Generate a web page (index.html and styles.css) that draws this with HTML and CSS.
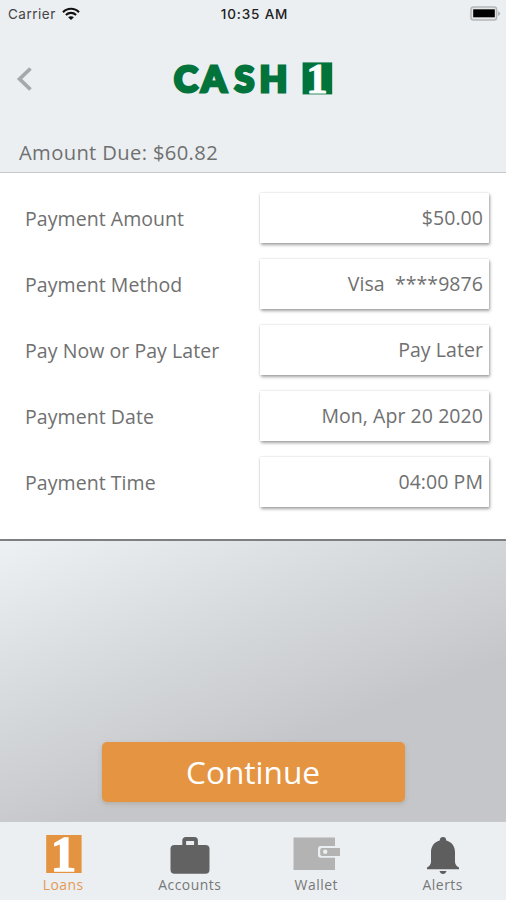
FILE: index.html
```html
<!DOCTYPE html>
<html lang="en">
<head>
<meta charset="utf-8">
<title>CASH 1</title>
<link rel="stylesheet" href="styles.css">
</head>
<body>
<div class="screen">
  <header class="header">
    <div class="status">
      <div class="carrier">
        <span>Carrier</span>
        <svg width="18" height="14" viewBox="0 0 18 14" fill="none" stroke="#111" stroke-width="2.1"><path d="M1 5.2C5.4.6 12.6.6 17 5.2M3.9 8C6.8 5.2 11.2 5.2 14.1 8"/><path d="M9 13 6.1 10.2C7.7 8.8 10.3 8.8 11.9 10.2Z" fill="#111" stroke="none"/></svg>
      </div>
      <span class="time">10:35 AM</span>
      <svg class="battery" width="31" height="16" viewBox="0 0 31 16"><rect x="1" y="1.1" width="25.6" height="13" rx="2.5" fill="#e4e6e8" stroke="#b4b6b8" stroke-width="1.5"/><rect x="3.2" y="3.3" width="21.6" height="8" fill="#000"/><path d="M28 5.2Q30.2 6 30.2 7.6T28 10Z" fill="#b4b6b8"/></svg>
    </div>
    <div class="brand">
      <svg class="back" width="16" height="26" viewBox="0 0 16 26" fill="none" stroke="#a7a8a9" stroke-width="3.8"><path d="M14.5 2.5 3.6 13 14.5 23.5"/></svg>
      <svg class="logo" width="170" height="60" viewBox="-4 -12 170 60" aria-label="CASH 1">
        <text class="logo-word" x="2 29.2 62.5 87.5" y="31.1">CASH</text>
        <rect x="130.6" y="1.4" width="29.6" height="32" fill="#03733c"/>
        <text class="logo-one" x="145" y="31.8" text-anchor="middle">1</text>
      </svg>
    </div>
    <div class="due">Amount Due: $60.82</div>
  </header>
  <main class="form">
    <div class="row"><span class="label">Payment Amount</span><div class="field">$50.00</div></div>
    <div class="row"><span class="label">Payment Method</span><div class="field">Visa&nbsp; ****9876</div></div>
    <div class="row"><span class="label">Pay Now or Pay Later</span><div class="field">Pay Later</div></div>
    <div class="row"><span class="label">Payment Date</span><div class="field">Mon, Apr 20 2020</div></div>
    <div class="row"><span class="label">Payment Time</span><div class="field">04:00 PM</div></div>
  </main>
  <section class="action"><button class="continue">Continue</button></section>
  <nav class="tabs">
    <a class="tab active">
      <svg width="48" height="42" viewBox="0 0 48 42"><rect x="7.2" y="2" width="35.4" height="38" fill="#e49340"/><text class="tab-one" x="24.7" y="37.6" text-anchor="middle">1</text></svg>
      <span>Loans</span>
    </a>
    <a class="tab">
      <svg width="48" height="42" viewBox="0 0 48 42"><rect x="4.5" y="12" width="39" height="28.8" rx="4" fill="#626262"/><path d="M18.2 13V7.6Q18.2 6 19.8 6H28.4Q30 6 30 7.6V13" fill="none" stroke="#626262" stroke-width="3.8"/></svg>
      <span>Accounts</span>
    </a>
    <a class="tab">
      <svg width="48" height="42" viewBox="0 0 48 42"><path d="M1.5 4.5H43V37H1.5Z" fill="#b3b3b3"/><path d="M48 13H28.5Q26 13 26 15.5V22Q26 24.8 28.5 24.8H48Z" fill="#ebeff2"/><path d="M48 15H30Q28.2 15 28.2 17V21Q28.2 23 30 23H48Z" fill="#b3b3b3"/><circle cx="33.2" cy="18.7" r="2.2" fill="#ebeff2"/></svg>
      <span>Wallet</span>
    </a>
    <a class="tab">
      <svg width="48" height="42" viewBox="0 0 48 42"><path d="M24 4Q27 4 27.3 7.4C33 8.8 36 13.5 36 19V29Q36.3 33 40 34.4V36.2H8V34.4Q11.7 33 12 29V19C12 13.5 15 8.8 20.7 7.4Q21 4 24 4ZM20.5 38H27.5Q26.6 41 24 41T20.5 38Z" fill="#5e5e5e"/></svg>
      <span>Alerts</span>
    </a>
  </nav>
</div>
</body>
</html>
```
FILE: styles.css
```css
* { box-sizing: border-box; }
body { margin: 0; font-family: "Open Sans", "Noto Sans", sans-serif; color: #707070; }
.screen { width: 506px; height: 900px; display: flex; flex-direction: column; overflow: hidden; background: #ebeff2; }
.header { height: 172px; display: flex; flex-direction: column; }
.status { height: 27px; padding: 0 5px 0 8px; display: grid; grid-template-columns: 1fr auto 1fr; align-items: center; font: 13.5px Inter, sans-serif; color: #444; }
.carrier { display: flex; align-items: center; gap: 6px; letter-spacing: .5px; }
.time { font-weight: 500; letter-spacing: .85px; color: #222; }
.battery { justify-self: end; }
.brand { height: 104px; display: grid; grid-template-columns: 1fr 170px 1fr; align-items: center; padding: 0 16px; }
.logo { grid-column: 2; overflow: visible; }
.logo-word { font: 900 36px Lato, sans-serif; fill: #03733c; stroke: #03733c; stroke-width: 3px; }
.logo-one { font: bold 43px "Liberation Serif", serif; fill: #fff; stroke: #fff; stroke-width: .8px; }
.due { padding: 3px 0 0 19px; font-size: 20.2px; line-height: 37px; letter-spacing: .35px; }
.form { height: 369px; padding: 20px 17px 0 25px; background: #fff; border-top: 1px solid #c6c9cb; border-bottom: 2px solid #7c8083; display: flex; flex-direction: column; gap: 16px; }
.row { height: 50px; display: flex; align-items: center; justify-content: space-between; font-size: 19.5px; letter-spacing: .06px; }
.field { width: 229px; height: 50px; padding-right: 6px; line-height: 50px; text-align: right; background: #fff; box-shadow: 1px 2px 3px rgba(0,0,0,.35), 0 0 2px rgba(0,0,0,.15); }
.action { height: 280px; display: flex; justify-content: center; align-items: flex-end; padding-bottom: 19px; background: linear-gradient(159deg, #edf1f4 0%, #dbdfe2 27%, #c5c6c9 66%); }
.continue { width: 303px; height: 60px; border: 0; padding: 0 0 1px; border-radius: 5px; background: #e59542; color: #fff; font: 400 31.6px "Open Sans", sans-serif; box-shadow: 0 2px 4px rgba(140,120,90,.3); }
.tabs { height: 79px; border-top: 1px solid #c8cbce; display: grid; grid-template-columns: repeat(4, 1fr); padding-top: 11px; }
.tab { display: flex; flex-direction: column; align-items: center; font-size: 13.9px; line-height: 19px; color: #777; letter-spacing: .5px; }
.tab svg { display: block; overflow: visible; }
.active { color: #e49a57; }
.tab-one { font: bold 51px "Liberation Serif", serif; fill: #fff; stroke: #fff; stroke-width: 1.4px; }
```
